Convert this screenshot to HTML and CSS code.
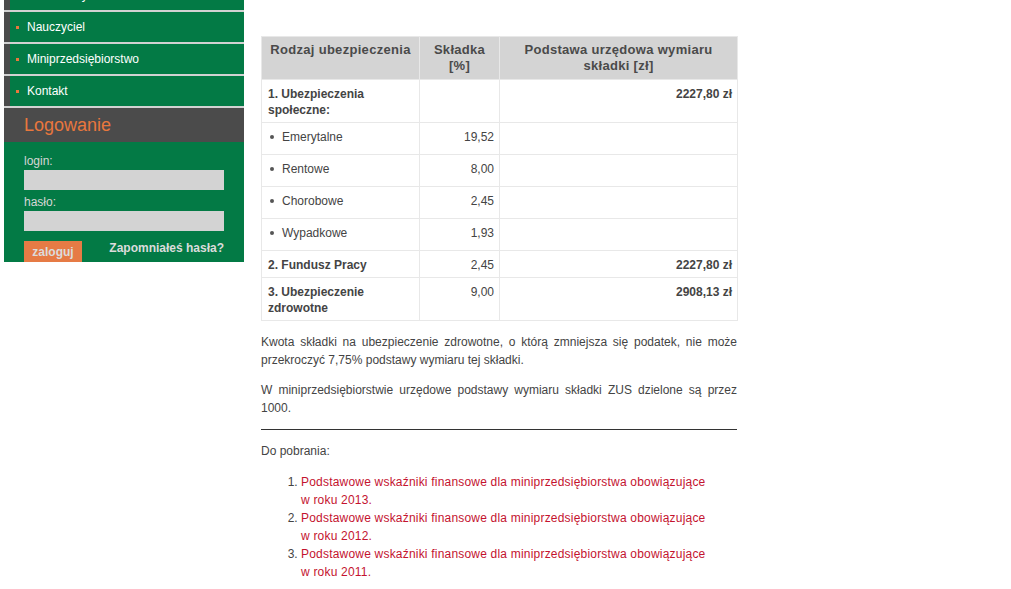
FILE: index.html
```html
<!DOCTYPE html>
<html lang="pl">
<head>
<meta charset="utf-8">
<title>Miniprzedsiębiorstwo</title>
<link rel="stylesheet" href="styles.css">
</head>
<body>
<div class="page">
  <aside class="sidebar">
    <ul class="menu">
      <li><a href="#"><span class="dot"></span>Bezrobotny</a></li>
      <li><a href="#"><span class="dot"></span>Nauczyciel</a></li>
      <li><a href="#"><span class="dot"></span>Miniprzedsiębiorstwo</a></li>
      <li><a href="#"><span class="dot"></span>Kontakt</a></li>
    </ul>
    <div class="login-head">Logowanie</div>
    <form class="login">
      <label class="lbl">login:</label>
      <input class="field" type="text">
      <label class="lbl lbl2">hasło:</label>
      <input class="field" type="password">
      <div class="login-row">
        <button type="button" class="btn">zaloguj</button>
        <a href="#" class="forgot">Zapomniałeś hasła?</a>
      </div>
    </form>
  </aside>
  <main class="content">
    <table class="zus">
      <colgroup><col class="c1"><col class="c2"><col class="c3"></colgroup>
      <thead>
        <tr><th>Rodzaj ubezpieczenia</th><th>Składka [%]</th><th>Podstawa urzędowa wymiaru składki [zł]</th></tr>
      </thead>
      <tbody>
        <tr><td class="b">1. Ubezpieczenia społeczne:</td><td></td><td class="num b">2227,80 zł</td></tr>
        <tr class="sub"><td><span class="bullet"></span>Emerytalne</td><td class="num">19,52</td><td></td></tr>
        <tr class="sub"><td><span class="bullet"></span>Rentowe</td><td class="num">8,00</td><td></td></tr>
        <tr class="sub"><td><span class="bullet"></span>Chorobowe</td><td class="num">2,45</td><td></td></tr>
        <tr class="sub"><td><span class="bullet"></span>Wypadkowe</td><td class="num">1,93</td><td></td></tr>
        <tr><td class="b">2. Fundusz Pracy</td><td class="num">2,45</td><td class="num b">2227,80 zł</td></tr>
        <tr><td class="b">3. Ubezpieczenie zdrowotne</td><td class="num">9,00</td><td class="num b">2908,13 zł</td></tr>
      </tbody>
    </table>
    <p>Kwota składki na ubezpieczenie zdrowotne, o którą zmniejsza się podatek, nie może przekroczyć 7,75% podstawy wymiaru tej składki.</p>
    <p>W miniprzedsiębiorstwie urzędowe podstawy wymiaru składki ZUS dzielone są przez 1000.</p>
    <hr class="sep">
    <p>Do pobrania:</p>
    <ol class="downloads">
      <li><a href="#">Podstawowe wskaźniki finansowe dla miniprzedsiębiorstwa obowiązujące w roku 2013.</a></li>
      <li><a href="#">Podstawowe wskaźniki finansowe dla miniprzedsiębiorstwa obowiązujące w roku 2012.</a></li>
      <li><a href="#">Podstawowe wskaźniki finansowe dla miniprzedsiębiorstwa obowiązujące w roku 2011.</a></li>
    </ol>
  </main>
</div>
</body>
</html>
```

FILE: styles.css
```css
html, body {
  margin: 0;
  padding: 0;
  background: #fff;
}
body {
  font-family: "Liberation Sans", Arial, sans-serif;
  font-size: 12px;
  color: #444;
  overflow: hidden;
}
.page {
  display: flex;
  align-items: flex-start;
  padding-left: 4px;
  gap: 17px;
}
.sidebar {
  width: 240px;
  flex: none;
  margin-top: -20px;
}
.menu {
  list-style: none;
  margin: 0;
  padding: 0;
}
.menu li {
  border-bottom: 2px solid #d2d2d2;
}
.menu a {
  display: flex;
  align-items: center;
  height: 30px;
  border-left: 6px solid #4b4b4b;
  background: #037a45;
  color: #fff;
  text-decoration: none;
  padding-left: 6px;
  font-size: 12px;
}
.menu .dot {
  width: 3px;
  height: 3px;
  background: #e8773d;
  margin-right: 8px;
}
.login-head {
  background: #4b4b4b;
  height: 34px;
  line-height: 35px;
  padding-left: 20px;
  color: #e8773d;
  font-size: 18px;
}
.login {
  background: #037a45;
  padding: 11px 20px 0;
  display: flex;
  flex-direction: column;
  margin: 0;
}
.lbl {
  color: #d6d6d6;
  font-size: 12px;
  line-height: 17px;
  height: 17px;
}
.lbl2 {
  margin-top: 4px;
}
.field {
  display: block;
  width: 200px;
  height: 20px;
  box-sizing: border-box;
  border: 0;
  margin: 0;
  padding: 0;
  background: #d3d3d3;
}
.login-row {
  display: flex;
  justify-content: space-between;
  align-items: flex-start;
  margin-top: 10px;
}
.btn {
  width: 58px;
  height: 21px;
  border: 0;
  margin: 0;
  padding: 0;
  background: #e67b45;
  color: #dcdcdc;
  font-family: "Liberation Sans", Arial, sans-serif;
  font-size: 12px;
  font-weight: bold;
}
.forgot {
  color: #dcdcdc;
  font-weight: bold;
  font-size: 12px;
  line-height: 15px;
  text-decoration: none;
}
.content {
  width: 476px;
  padding-top: 36px;
}
.zus {
  width: 476px;
  border-collapse: collapse;
  table-layout: fixed;
  margin-bottom: 12px;
}
.zus .c1 { width: 158px; }
.zus .c2 { width: 80px; }
.zus .c3 { width: 238px; }
.zus th {
  background: #d4d4d4;
  border: 1px solid #e8e8e8;
  font-size: 13px;
  letter-spacing: 0.3px;
  line-height: 16px;
  font-weight: bold;
  color: #4a4a4a;
  text-align: center;
  vertical-align: top;
  padding: 5px 4px 5px;
}
.zus td {
  border: 1px solid #e8e8e8;
  line-height: 16px;
  padding: 6px 5px 4px 6px;
  vertical-align: top;
  color: #444;
}
.zus tr.sub td {
  padding-bottom: 9px;
}
.zus td.b {
  font-weight: bold;
}
.zus td.num {
  text-align: right;
}
.bullet {
  display: inline-block;
  width: 4px;
  height: 4px;
  border-radius: 50%;
  background: #555;
  margin: 0 8px 2px 2px;
  vertical-align: middle;
}
.content p {
  margin: 12px 0;
  line-height: 18px;
  text-align: justify;
}
.sep {
  border: 0;
  border-top: 1px solid #333;
  margin: 12px 0;
  height: 0;
}
.downloads {
  margin: 13px 0 0;
  padding: 0 26px 0 40px;
  line-height: 18px;
}
.downloads a {
  color: #c4132f;
  text-decoration: none;
  letter-spacing: 0.2px;
}
```
